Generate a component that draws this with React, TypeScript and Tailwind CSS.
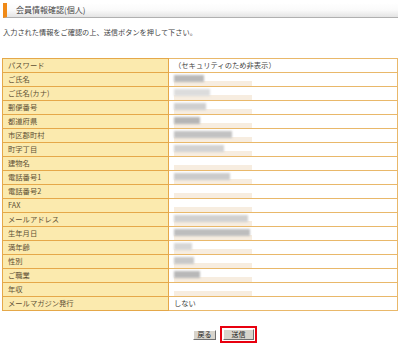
import React from "react";

const rows: { label: string; value?: string; blur?: number; tone?: string }[] = [
  { label: "パスワード", value: "（セキュリティのため非表示）" },
  { label: "ご氏名", blur: 30, tone: "#b8b8b8" },
  { label: "ご氏名(カナ)", blur: 36, tone: "#dcdcdc" },
  { label: "郵便番号", blur: 32, tone: "#cfcfcf" },
  { label: "都道府県", blur: 26, tone: "#b5b5b5" },
  { label: "市区郡町村", blur: 58, tone: "#c2c2c2" },
  { label: "町字丁目", blur: 50, tone: "#d2d2d2" },
  { label: "建物名" },
  { label: "電話番号1", blur: 56, tone: "#cbcbcb" },
  { label: "電話番号2" },
  { label: "FAX" },
  { label: "メールアドレス", blur: 74, tone: "#d0d0d0" },
  { label: "生年月日", blur: 76, tone: "#bdbdbd" },
  { label: "満年齢", blur: 18, tone: "#d6d6d6" },
  { label: "性別", blur: 20, tone: "#c8c8c8" },
  { label: "ご職業", blur: 26, tone: "#b8b8b8" },
  { label: "年収" },
  { label: "メールマガジン発行", value: "しない" },
];

export default function App() {
  return (
    <div
      className="w-[400px] h-[344px] bg-white overflow-hidden text-[#333]"
      style={{ fontFamily: '"Noto Sans CJK JP", "Noto Sans", sans-serif' }}
    >
      {/* title bar */}
      <div className="mt-[3px] ml-[3px] mr-[2px] h-[15px] flex items-center border-l-[4px] border-l-[#f08a17] border-b border-b-[#b0b0b0] bg-gradient-to-b from-white via-[#fafafa] to-[#e4e4e4] pl-[9px]">
        <span className="text-[8px] leading-none text-[#444]">会員情報確認(個人)</span>
      </div>

      <p className="mt-[11px] ml-[3px] text-[7.2px] leading-none text-[#444]">
        入力された情報をご確認の上、送信ボタンを押して下さい。
      </p>

      {/* table */}
      <table className="mt-[22px] ml-[2px] w-[396px] border-collapse border border-[#e3a03a] text-[7.3px] leading-none">
        <tbody>
          {rows.map((r) => (
            <tr key={r.label}>
              <td className="w-[166px] h-[14px] p-0 bg-[#fbeaae] border border-[#e5a849] pl-[5px] text-[#5e5034] align-middle">
                {r.label}
              </td>
              <td className="h-[14px] p-0 border border-[#e9b86a] pl-[5px] align-middle text-[#444]">
                {r.value ? (
                  r.value
                ) : (
                  <div className="relative h-[12px]">
                    <div className="absolute left-0 top-[7px] w-[78px] h-[5px] bg-[#f7ede0] blur-[0.5px]" />
                    {r.blur ? (
                      <div
                        className="absolute left-0 top-[1px] h-[7px] blur-[1px]"
                        style={{ width: r.blur, background: r.tone }}
                      />
                    ) : null}
                  </div>
                )}
              </td>
            </tr>
          ))}
        </tbody>
      </table>

      {/* buttons */}
      <div className="mt-[15px] flex items-center justify-center gap-[4px] pl-[50px]">
        <button className="h-[10px] w-[23px] bg-[#d8d4cc] border border-t-white border-l-white border-r-[#707070] border-b-[#707070] text-[7px] leading-none text-[#222]">
          戻る
        </button>
        <div className="border-[2px] border-[#e8000f] p-[1px]">
          <button className="h-[11px] w-[31px] bg-[#d8d4cc] border border-t-white border-l-white border-r-[#707070] border-b-[#707070] text-[7px] leading-none text-[#222] block">
            送信
          </button>
        </div>
      </div>
    </div>
  );
}
